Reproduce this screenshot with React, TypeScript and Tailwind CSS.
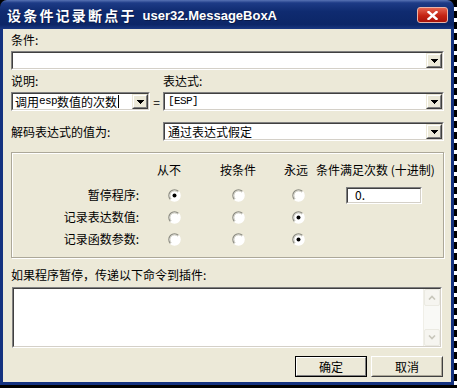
import React from 'react';

type BoxProps = { className?: string; children?: React.ReactNode };

// classic 2px sunken frame (edit / combo / list)
const Sunken: React.FC<BoxProps> = ({ className = '', children }) => (
  <div className={`border border-t-[#808080] border-l-[#808080] border-r-white border-b-white ${className}`}>
    <div className="h-full flex bg-white border border-t-[#404040] border-l-[#404040] border-r-[#d4d0c8] border-b-[#d4d0c8]">
      {children}
    </div>
  </div>
);

const DropBtn = () => (
  <div className="w-[16px] h-full border border-t-[#ece9d8] border-l-[#ece9d8] border-r-[#404040] border-b-[#404040]">
    <div className="h-full flex items-center justify-center bg-[#ece9d8] border border-t-white border-l-white border-r-[#808080] border-b-[#808080]">
      <svg width="7" height="4" viewBox="0 0 7 4" shapeRendering="crispEdges">
        <rect x="0" y="0" width="7" height="1" fill="#000" />
        <rect x="1" y="1" width="5" height="1" fill="#000" />
        <rect x="2" y="2" width="3" height="1" fill="#000" />
        <rect x="3" y="3" width="1" height="1" fill="#000" />
      </svg>
    </div>
  </div>
);

const Combo: React.FC<BoxProps> = ({ className = '', children }) => (
  <Sunken className={`h-[19px] ${className}`}>
    <div className="flex-1 flex items-center pl-[2px] overflow-hidden whitespace-nowrap">{children}</div>
    <DropBtn />
  </Sunken>
);

const Radio = ({ on }: { on?: boolean }) => (
  <svg width="13" height="13" viewBox="0 0 13 13" className="shrink-0">
    <circle cx="6.5" cy="6.5" r="5.6" fill="#fff" />
    <path d="M2.5 10.5 A5.6 5.6 0 0 1 10.5 2.5" stroke="#8a8a80" strokeWidth="1.2" fill="none" />
    <path d="M3.3 9.7 A4.5 4.5 0 0 1 9.7 3.3" stroke="#d0cfc4" strokeWidth="1" fill="none" />
    <path d="M10.5 2.5 A5.6 5.6 0 0 1 2.5 10.5" stroke="#fff" strokeWidth="1.2" fill="none" />
    {on && <circle cx="6.5" cy="6.5" r="2" fill="#000" />}
  </svg>
);

const ScrollArrow = ({ up }: { up?: boolean }) => (
  <div className="h-[17px] rounded-[2px] border border-[#ebeae2] bg-[#f6f5f0] flex items-center justify-center">
    <svg width="8" height="5" viewBox="0 0 8 5">
      <path d={up ? 'M1 4.5L4 1.5L7 4.5' : 'M1 0.5L4 3.5L7 0.5'} stroke="#c8c6bb" strokeWidth="1.6" fill="none" />
    </svg>
  </div>
);

const rows: { label: string; pick: number }[] = [
  { label: '暂停程序:', pick: 0 },
  { label: '记录表达数值:', pick: 2 },
  { label: '记录函数参数:', pick: 2 },
];

const App: React.FC = () => {
  return (
    <div className="w-[457px] h-[388px] bg-black flex font-['Noto_Sans_CJK_SC',sans-serif] text-[12px] text-black overflow-hidden">
      {/* Window */}
      <div className="w-[454px] h-[385px] flex flex-col">
        {/* Title bar */}
        <div className="h-[29px] shrink-0 rounded-t-[7px] flex items-center pl-[7px] pr-[6px] pt-[1px] bg-[linear-gradient(to_bottom,#5873b4_0%,#1d3b86_10%,#0f2b70_40%,#0c2667_85%,#1a3882_100%)]">
          <span className="text-white font-bold text-[14px] tracking-[2.2px] leading-none [text-shadow:1px_1px_0_#0a1a48]">设条件记录断点于</span>
          <span className="ml-[6px] text-white font-bold text-[13px] leading-none font-['Liberation_Sans',sans-serif] [text-shadow:1px_1px_0_#0a1a48]">user32.MessageBoxA</span>
          <div className="ml-auto w-[31px] h-[16px] rounded-[3px] border border-[#e8b4a8] bg-[linear-gradient(to_bottom,#e4634e,#c42413_55%,#a8140a)] flex items-center justify-center">
            <svg width="11" height="9" viewBox="0 0 11 9">
              <path d="M1.5 1L9.5 8M9.5 1L1.5 8" stroke="#fff" strokeWidth="2.4" strokeLinecap="square" />
            </svg>
          </div>
        </div>

        {/* Body */}
        <div className="flex-1 flex flex-col bg-[#ece9d8] border-x-[3px] border-b-[3px] border-[#14327f] pl-[8px] pr-[7px] pt-[3px]">
          <div className="h-[16px] leading-[16px]">条件:</div>
          <Combo className="mt-[3px]" />

          <div className="mt-[3px] h-[16px] leading-[16px] flex">
            <span className="w-[152px]">说明:</span>
            <span>表达式:</span>
          </div>
          <div className="mt-[3px] flex items-center">
            <Combo className="w-[139px]">
              <span className="leading-none">调用</span>
              <span className="leading-none font-['Liberation_Mono',monospace] text-[11px] tracking-[-0.6px]">esp</span>
              <span className="leading-none">数值的次数</span>
              <span className="ml-[1px] w-px h-[13px] bg-black" />
            </Combo>
            <span className="w-[13px] text-center leading-none">=</span>
            <Combo className="flex-1">
              <span className="pl-[1px] font-['Liberation_Mono',monospace] text-[11px] tracking-[-0.6px] leading-none">[ESP]</span>
            </Combo>
          </div>

          <div className="mt-[11px] flex items-center">
            <span className="w-[152px] leading-none">解码表达式的值为:</span>
            <Combo className="flex-1">
              <span className="pl-[1px] leading-none">通过表达式假定</span>
            </Combo>
          </div>

          {/* Group box */}
          <div className="mt-[11px] h-[106px] border border-[#aca899] shadow-[inset_1px_1px_0_#fff,1px_1px_0_#fff] pt-[9px]">
            <div className="h-[16px] leading-[16px] flex">
              <span className="ml-[145px] w-[24px]">从不</span>
              <span className="ml-[39px] w-[36px]">按条件</span>
              <span className="ml-[28px] w-[24px]">永远</span>
              <span className="ml-[8px] whitespace-nowrap">条件满足次数 (十进制)</span>
            </div>
            <div className="mt-[6px] flex flex-col">
              {rows.map((r, i) => (
                <div key={r.label} className="h-[22px] flex items-center">
                  <span className="w-[128px] text-right leading-none pr-[1px]">{r.label}</span>
                  <span className="ml-[28px]"><Radio on={r.pick === 0} /></span>
                  <span className="ml-[51px]"><Radio on={r.pick === 1} /></span>
                  <span className="ml-[47px]"><Radio on={r.pick === 2} /></span>
                  {i === 0 && (
                    <Sunken className="ml-[41px] w-[76px] h-[17px]">
                      <span className="pl-[7px] self-center leading-none">0.</span>
                    </Sunken>
                  )}
                </div>
              ))}
            </div>
          </div>

          <div className="mt-[9px] h-[16px] leading-[16px]">如果程序暂停，传递以下命令到插件:</div>
          <Sunken className="mt-[4px] ml-[1px] mr-[2px] h-[61px]">
            <div className="flex-1" />
            <div className="w-[17px] flex flex-col bg-[#f9f9f6] border-l border-[#f0efe8]">
              <ScrollArrow up />
              <div className="flex-1" />
              <ScrollArrow />
            </div>
          </Sunken>

          <div className="mt-[8px] h-[21px] flex justify-end gap-[4px] pr-[1px]">
            <div className="w-[72px] h-full border border-black">
              <div className="h-full flex items-center justify-center border border-t-white border-l-white border-r-[#808080] border-b-[#808080] leading-none">确定</div>
            </div>
            <div className="w-[72px] h-full border border-t-white border-l-white border-r-[#404040] border-b-[#404040]">
              <div className="h-full flex items-center justify-center border border-t-[#ece9d8] border-l-[#ece9d8] border-r-[#aca899] border-b-[#aca899] leading-none">取消</div>
            </div>
          </div>
        </div>
      </div>

      {/* background strip at right edge */}
      <div className="w-[3px] h-[385px] bg-[repeating-linear-gradient(to_bottom,#000_0px,#000_7px,#fff_7px,#fff_11px)]" />
    </div>
  );
};

export default App;
